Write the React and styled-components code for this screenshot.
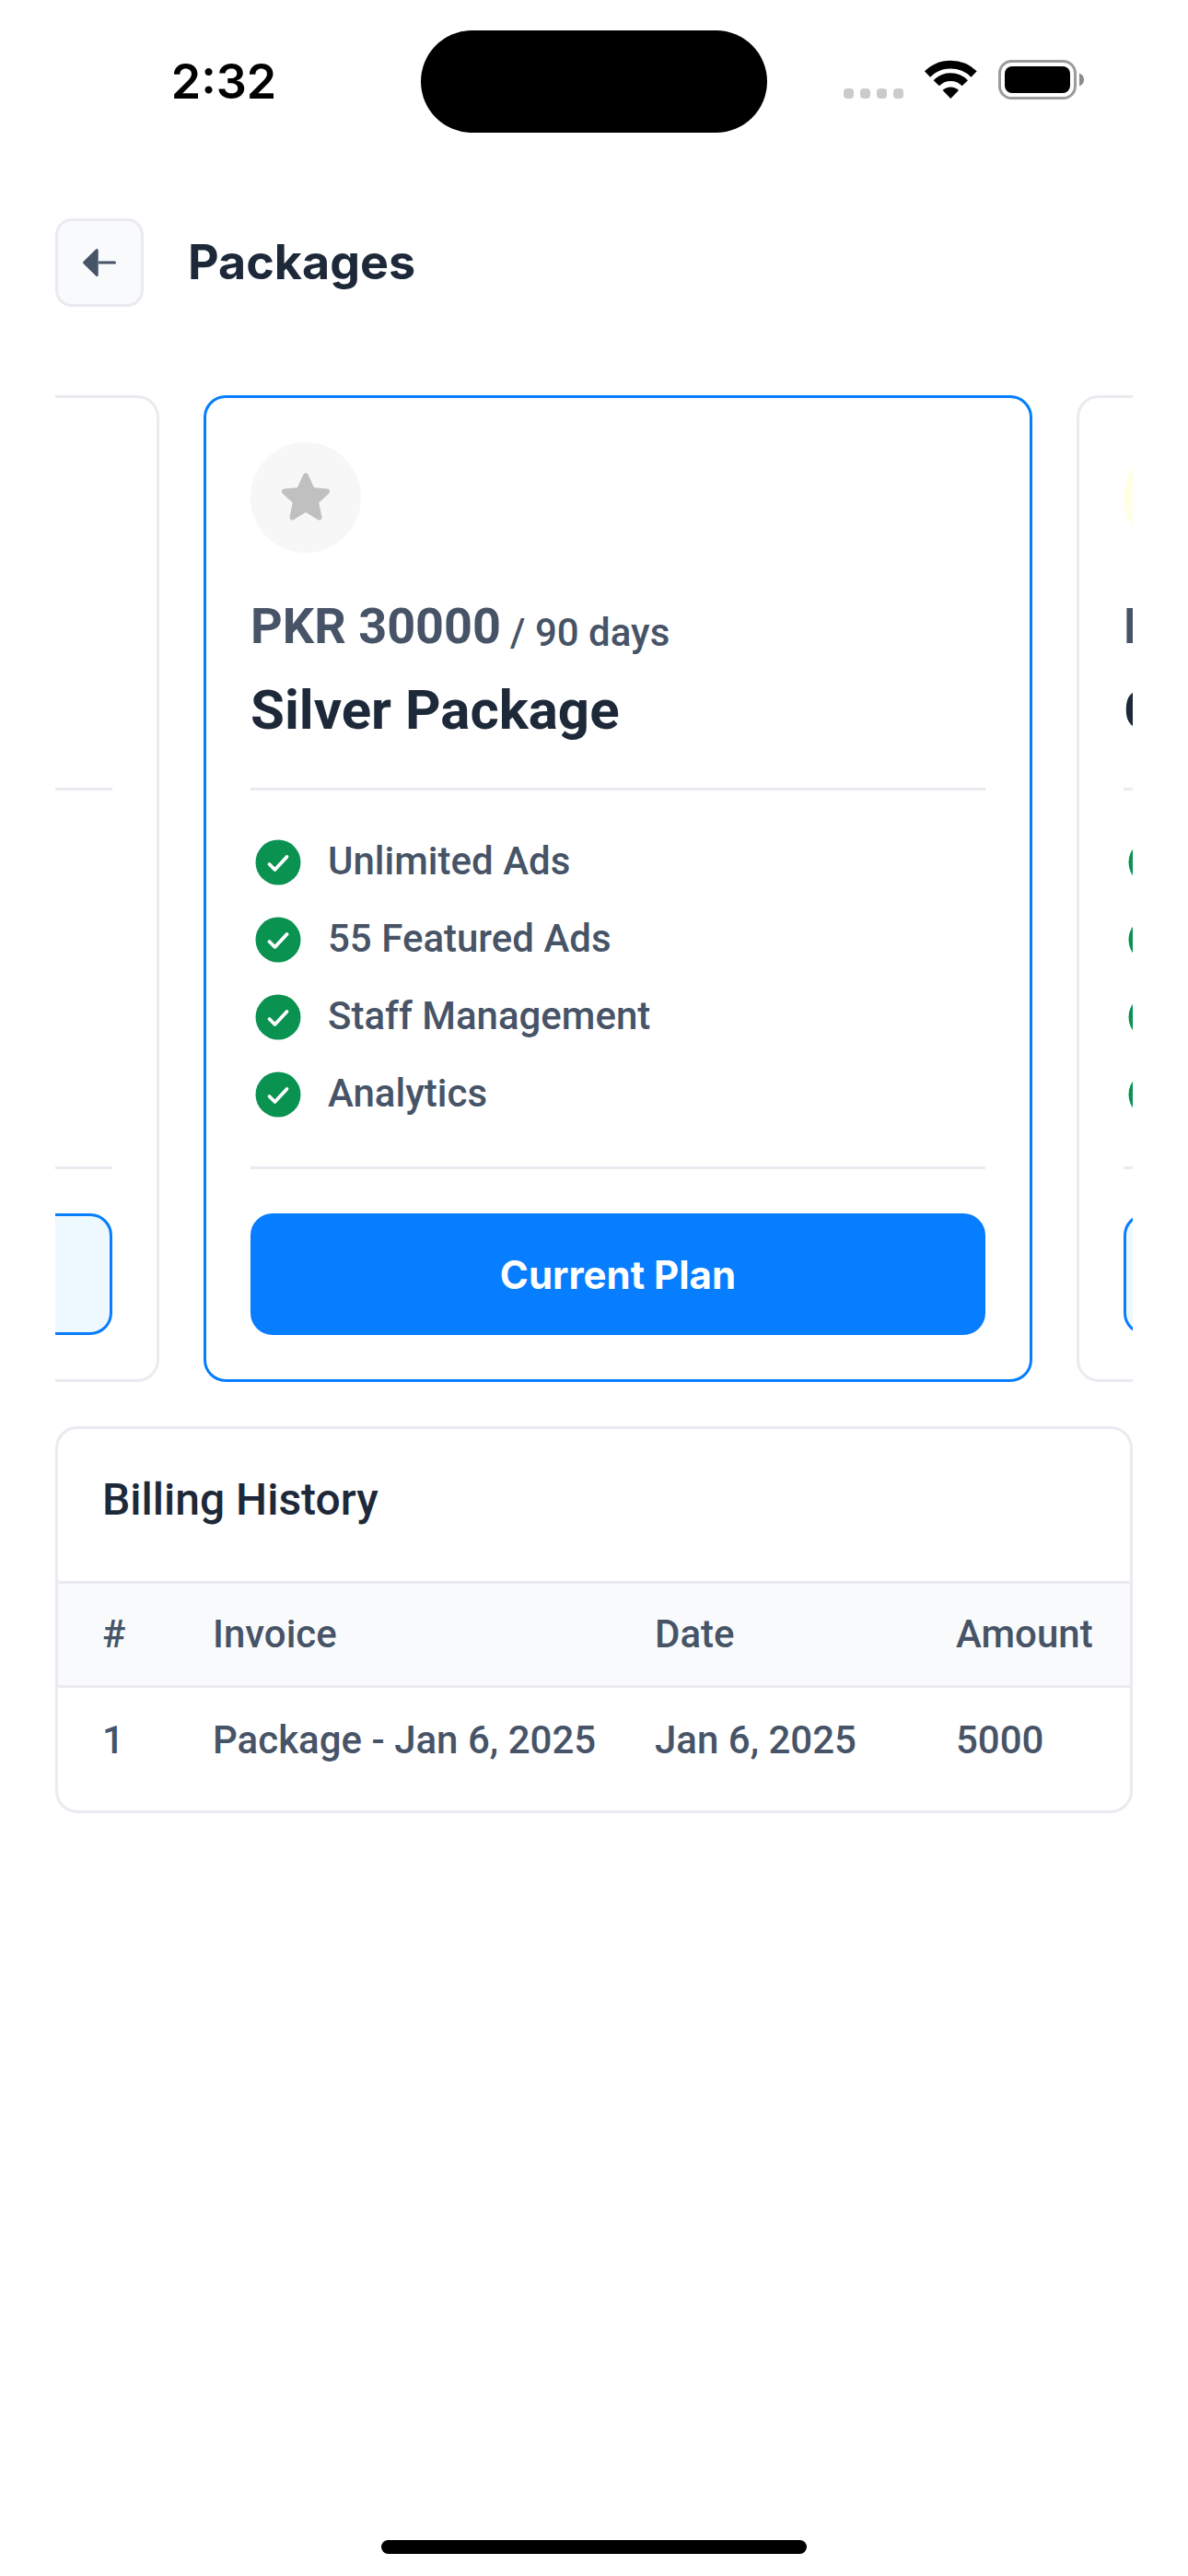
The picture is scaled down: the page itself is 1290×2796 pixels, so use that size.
import React, { useLayoutEffect, useRef } from "react";
import styled, { createGlobalStyle } from "styled-components";

const color = {
  ink: "#1d2939",
  body: "#475467",
  line: "#eaeaf0",
  tint: "#f9fafc",
  primary: "#077dff",
  primarySoft: "#edf8ff",
  success: "#099250",
};

const GlobalStyle = createGlobalStyle`
  *, *::before, *::after { box-sizing: border-box; }
  body { margin: 0; background: #fff; }
  h1, h2, h3, p, ul { margin: 0; padding: 0; }
`;

const Screen = styled.div`
  display: flex;
  flex-direction: column;
  min-height: 100vh;
  overflow: hidden;
  color: ${color.body};
  font-family: Roboto, "Liberation Sans", sans-serif;
  font-size: 42px;
  font-weight: 500;
  line-height: 49px;
`;

const StatusBar = styled.div`
  display: grid;
  grid-template-columns: 1fr 376px 1fr;
  align-items: center;
  height: 177px;
`;

const Clock = styled.time`
  justify-self: center;
  padding-left: 29px;
  color: #000;
  font-family: Inter, sans-serif;
  font-size: 52px;
  font-weight: 600;
  line-height: 66px;
`;

const Island = styled.div`
  height: 111px;
  border-radius: 56px;
  background: #000;
`;

const Indicators = styled.div`
  display: flex;
  justify-content: flex-end;
  padding: 7px 112px 0 0;
`;

const Header = styled.header`
  display: flex;
  align-items: center;
  gap: 48px;
  padding: 60px 60px 96px;
`;

const BackButton = styled.button`
  display: grid;
  place-items: center;
  width: 96px;
  height: 96px;
  padding: 0;
  border: 3px solid ${color.line};
  border-radius: 18px;
  background: ${color.tint};
`;

const PageTitle = styled.h1`
  color: ${color.ink};
  font-family: Inter, sans-serif;
  font-size: 52px;
  font-weight: 700;
  line-height: 66px;
`;

const Main = styled.main`
  display: flex;
  flex: 1;
  flex-direction: column;
  gap: 48px;
  padding: 0 60px;
`;

const Carousel = styled.div`
  position: relative;
  display: flex;
  gap: 48px;
  overflow-x: auto;
  scrollbar-width: none;
`;

const Card = styled.article`
  flex: 0 0 900px;
  padding: 48px;
  border: 3px solid ${(p) => (p.$active ? color.primary : color.line)};
  border-radius: 24px;
`;

const Badge = styled.div`
  display: grid;
  place-items: center;
  width: 120px;
  height: 120px;
  margin-bottom: 48px;
  border-radius: 50%;
  background: ${(p) => p.$bg};
  color: ${(p) => p.$fg};
`;

const PriceRow = styled.p`
  display: flex;
  align-items: flex-end;
  gap: 10px;
  margin-bottom: 24px;
`;

const Price = styled.strong`
  font-size: 54px;
  font-weight: 700;
  line-height: 63px;
`;

const PlanName = styled.h2`
  color: ${color.ink};
  font-size: 60px;
  font-weight: 700;
  line-height: 72px;
`;

const Features = styled.ul`
  display: flex;
  flex-direction: column;
  gap: 24px;
  margin: 48px 0;
  padding: 48px 0;
  border: solid ${color.line};
  border-width: 3px 0;
  list-style: none;
`;

const Feature = styled.li`
  display: flex;
  gap: 24px;
  height: 60px;
  line-height: 57px;
`;

const PlanButton = styled.button`
  display: block;
  width: 100%;
  height: 132px;
  padding: 0;
  border: 3px solid ${color.primary};
  border-radius: 24px;
  background: ${(p) => (p.$active ? color.primary : color.primarySoft)};
  color: ${(p) => (p.$active ? "#fff" : color.primary)};
  font-family: Inter, sans-serif;
  font-size: 42px;
  font-weight: 700;
  line-height: 49px;
`;

const Billing = styled.section`
  overflow: hidden;
  padding-bottom: 20px;
  border: 3px solid ${color.line};
  border-radius: 24px;
`;

const BillingTitle = styled.h2`
  padding: 48px 48px 60px;
  color: ${color.ink};
  font-size: 48px;
  font-weight: 500;
  line-height: 57px;
`;

const Table = styled.table`
  width: 100%;
  border-collapse: separate;
  border-spacing: 0;
  table-layout: fixed;
`;

const HeadCell = styled.th`
  width: ${(p) => p.$width};
  height: 116px;
  padding: 0 0 2px;
  border: solid ${color.line};
  border-width: 3px 0;
  background: ${color.tint};
  font-weight: 500;
  text-align: left;
  white-space: nowrap;

  &:first-child { padding-left: 48px; }
`;

const Cell = styled.td`
  height: 113px;
  padding: 0;
  white-space: nowrap;

  &:first-child { padding-left: 48px; }
`;

const HomeBar = styled.div`
  align-self: center;
  width: 462px;
  height: 15px;
  margin-bottom: 24px;
  border-radius: 8px;
  background: #000;
`;

const StatusIcons = () => (
  <svg width="264" height="56" viewBox="0 0 264 56" aria-hidden="true">
    <g fill="#cbcbcb">
      <rect x="2" y="32" width="11" height="11" rx="4" />
      <rect x="20" y="32" width="11" height="11" rx="4" />
      <rect x="38" y="32" width="11" height="11" rx="4" />
      <rect x="56" y="32" width="11" height="11" rx="4" />
    </g>
    <g fill="none" stroke="#000" strokeWidth="8.800">
      <path d="M93 16.500a36 36 0 0 1 50.600 0" />
      <path d="M102.800 26.300a21.500 21.500 0 0 1 31 0" />
    </g>
    <path d="M109.600 34a12.500 12.500 0 0 1 17.400 0l-8.700 9z" />
    <rect x="171.500" y="2.500" width="82" height="40" rx="13" fill="none" stroke="#9b9b9b" strokeWidth="3" />
    <rect x="177" y="8" width="71" height="29" rx="8" />
    <path d="M258 15.500q5 2 5 7t-5 7z" fill="#8a8a8a" />
  </svg>
);

const ArrowIcon = () => (
  <svg width="60" height="60" viewBox="0 0 60 60" aria-hidden="true">
    <path d="M30 30h16.500" stroke={color.body} strokeWidth="3" strokeLinecap="round" />
    <path d="M27.200 16.500L13.500 30l13.700 13.500z" fill={color.body} stroke={color.body} strokeWidth="3" strokeLinejoin="round" />
  </svg>
);

const StarIcon = () => (
  <svg width="60" height="60" viewBox="0 0 60 60" aria-hidden="true">
    <path
      d="M30 6.500l7 15.500 16 1.500-12 11 3.500 17L30 42.500 15.500 51.500l3.500-17-12-11L23 22z"
      fill="currentColor"
      stroke="currentColor"
      strokeWidth="6"
      strokeLinejoin="round"
    />
  </svg>
);

const CheckIcon = () => (
  <svg width="60" height="60" viewBox="0 0 60 60" aria-hidden="true">
    <circle cx="30" cy="30" r="24.500" fill={color.success} />
    <path d="M20.500 32l6 6 13-14" fill="none" stroke="#fff" strokeWidth="3.800" strokeLinecap="round" strokeLinejoin="round" />
  </svg>
);

const perks = ["Unlimited Ads", "55 Featured Ads", "Staff Management", "Analytics"];

const plans = [
  { name: "Basic Package", price: "PKR 5000", days: 30, bg: "#fff4ea", fg: "#cd7f32", perks },
  { name: "Silver Package", price: "PKR 30000", days: 90, bg: "#f7f7f7", fg: "#c0c0c0", perks, active: true },
  { name: "Gold Package", price: "PKR 50000", days: 180, bg: "#ffffe6", fg: "#ffd700", perks },
];

const columns = [
  { label: "#", width: "168px" },
  { label: "Invoice", width: "480px" },
  { label: "Date", width: "327px" },
  { label: "Amount", width: "auto" },
];

const invoices = [["1", "Package - Jan 6, 2025", "Jan 6, 2025", "5000"]];

/* How much of the previous card and the gap stays visible beside the active one. */
const PEEK = 161;

export default function App() {
  const carousel = useRef(null);
  const current = useRef(null);

  useLayoutEffect(() => {
    carousel.current.scrollLeft = current.current.offsetLeft - PEEK;
  }, []);

  return (
    <>
      <GlobalStyle />
      <Screen>
        <StatusBar>
          <Clock>2:32</Clock>
          <Island />
          <Indicators>
            <StatusIcons />
          </Indicators>
        </StatusBar>

        <Header>
          <BackButton type="button" aria-label="Back">
            <ArrowIcon />
          </BackButton>
          <PageTitle>Packages</PageTitle>
        </Header>

        <Main>
          <Carousel ref={carousel}>
            {plans.map((plan) => (
              <Card key={plan.name} $active={plan.active} ref={plan.active ? current : null}>
                <Badge $bg={plan.bg} $fg={plan.fg}>
                  <StarIcon />
                </Badge>
                <PriceRow>
                  <Price>{plan.price}</Price>
                  <span>/ {plan.days} days</span>
                </PriceRow>
                <PlanName>{plan.name}</PlanName>
                <Features>
                  {plan.perks.map((perk) => (
                    <Feature key={perk}>
                      <CheckIcon />
                      {perk}
                    </Feature>
                  ))}
                </Features>
                <PlanButton type="button" $active={plan.active}>
                  {plan.active ? "Current Plan" : "Subscribe"}
                </PlanButton>
              </Card>
            ))}
          </Carousel>

          <Billing>
            <BillingTitle>Billing History</BillingTitle>
            <Table>
              <thead>
                <tr>
                  {columns.map((column) => (
                    <HeadCell key={column.label} scope="col" $width={column.width}>
                      {column.label}
                    </HeadCell>
                  ))}
                </tr>
              </thead>
              <tbody>
                {invoices.map((row) => (
                  <tr key={row[0]}>
                    {row.map((value, i) => (
                      <Cell key={columns[i].label}>{value}</Cell>
                    ))}
                  </tr>
                ))}
              </tbody>
            </Table>
          </Billing>
        </Main>

        <HomeBar />
      </Screen>
    </>
  );
}
